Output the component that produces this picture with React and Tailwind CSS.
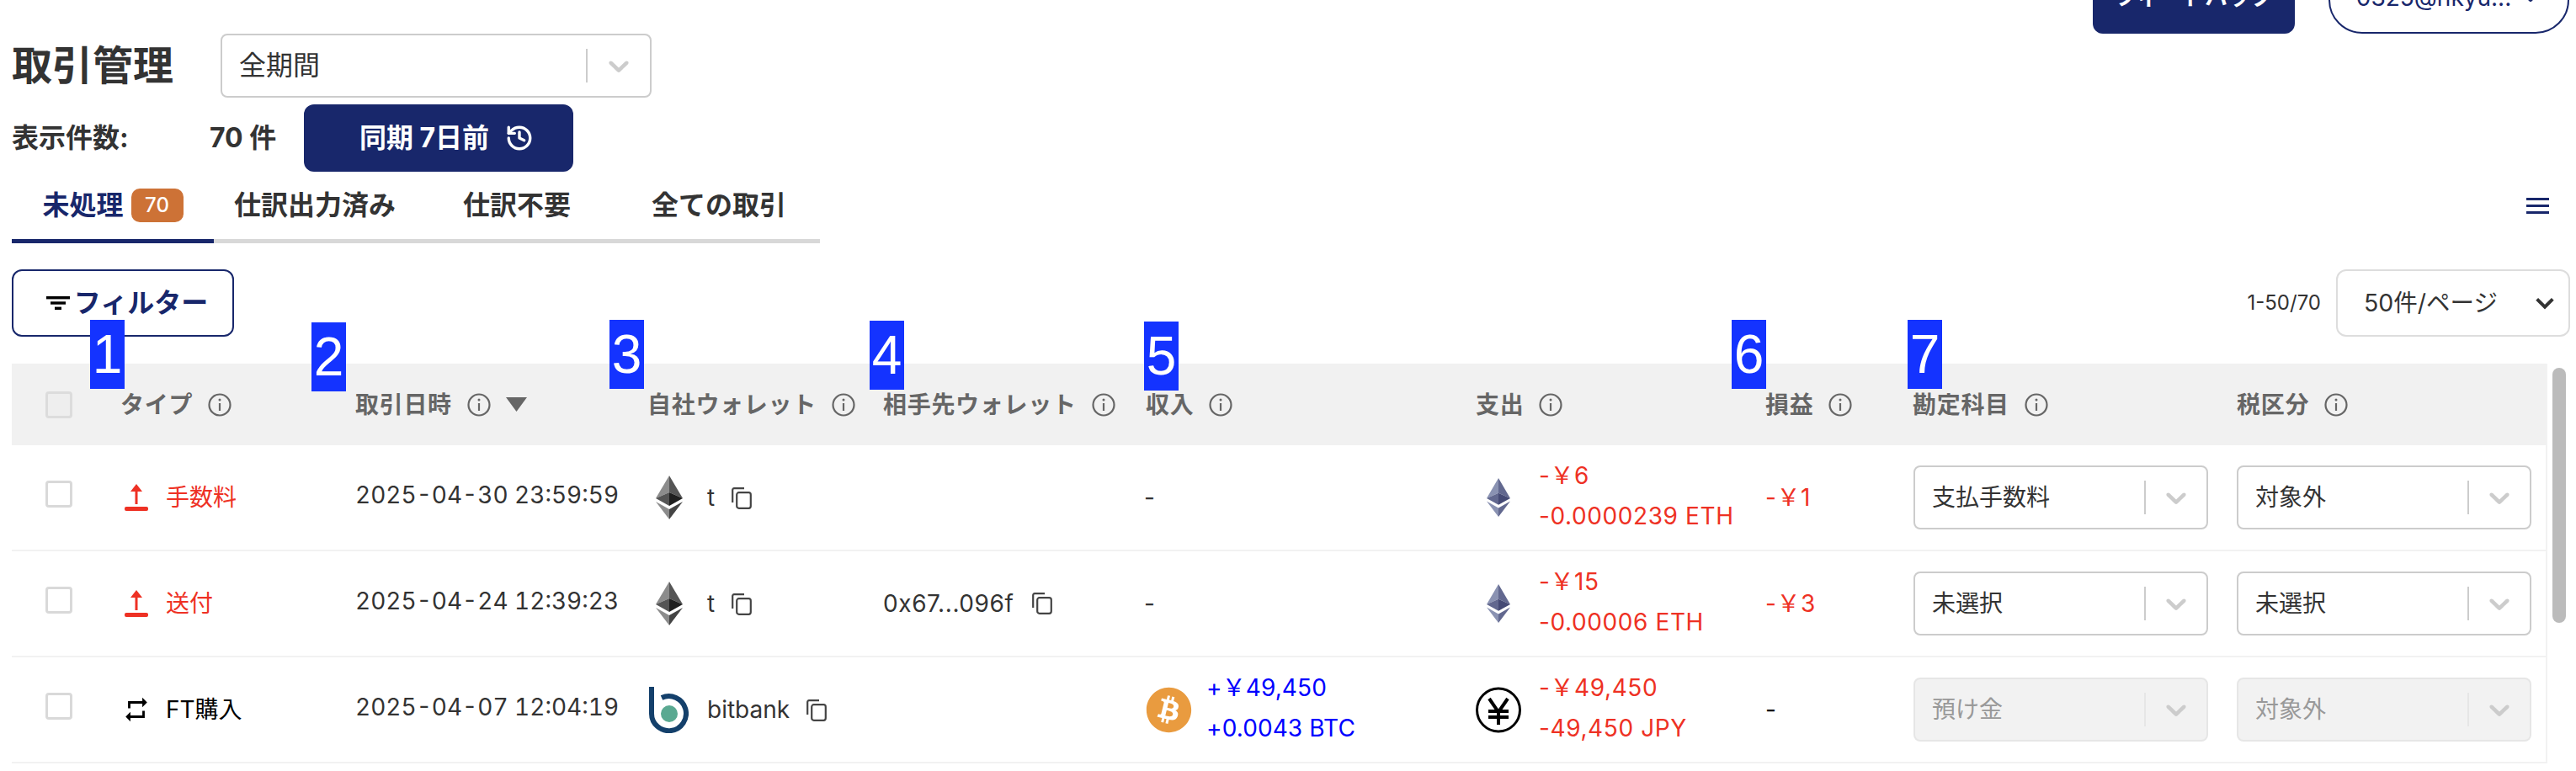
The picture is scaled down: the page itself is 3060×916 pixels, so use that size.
import React from "react";
import { History } from "lucide-react";
import { MdRepeat } from "react-icons/md";
import { FaBitcoin } from "react-icons/fa";

const GRID = "grid grid-cols-[129px_279px_347px_280px_310px_391px_347px_175px_385px_1fr]";

function Chevron({ className }) {
  return (
    <svg viewBox="0 0 20 20" className={className} fill="currentColor">
      <path d="M4.516 7.548c0.436-0.446 1.043-0.481 1.576 0l3.908 3.747 3.908-3.747c0.533-0.481 1.141-0.446 1.574 0 0.436 0.445 0.408 1.197 0 1.615-0.406 0.418-4.695 4.502-4.695 4.502-0.217 0.223-0.502 0.335-0.787 0.335s-0.57-0.112-0.789-0.335c0 0-4.287-4.084-4.695-4.502s-0.436-1.17 0-1.615z" />
    </svg>
  );
}

function Info() {
  return (
    <svg viewBox="0 0 28 28" className="w-[28px] h-[28px] shrink-0" fill="none" stroke="#666666" strokeWidth="2.2">
      <circle cx="14" cy="14" r="12.5" />
      <path d="M14 12v9" strokeWidth="2.2" />
      <circle cx="14" cy="8" r="1.5" fill="#666666" stroke="none" />
    </svg>
  );
}

function Copy() {
  return (
    <svg viewBox="0 0 24 26" className="w-[24px] h-[26px] shrink-0" fill="none" stroke="#444444" strokeWidth="2.2">
      <path d="M1.2 18V3a1.8 1.8 0 0 1 1.8-1.8H15" />
      <rect x="6.2" y="6.2" width="16.6" height="18.6" rx="2.5" />
    </svg>
  );
}

function Upload() {
  return (
    <svg viewBox="0 0 28 32" className="w-[28px] h-[32px] shrink-0" fill="#ee3124">
      <path d="M14 0l7 9h-5.5v15h-3V9H7z" />
      <rect x="0" y="27" width="28" height="5" rx="2" />
    </svg>
  );
}

function Eth({ muted, className }) {
  const c = muted
    ? ["#8a92b2", "#62688f", "#454a75", "#8a92b2", "#62688f"]
    : ["#8c8c8c", "#555555", "#1f1f1f", "#8c8c8c", "#444444"];
  return (
    <svg viewBox="0 0 32 52" preserveAspectRatio="none" className={className}>
      <polygon points="16,0 0,27 16,20" fill={c[0]} />
      <polygon points="16,0 32,27 16,20" fill={c[1]} />
      <polygon points="16,20 0,27 16,36" fill={c[1]} />
      <polygon points="16,20 32,27 16,36" fill={c[2]} />
      <polygon points="0,31 16,52 16,40" fill={c[3]} />
      <polygon points="32,31 16,52 16,40" fill={c[4]} />
    </svg>
  );
}

function Bitbank() {
  return (
    <svg viewBox="0 0 47 55" className="w-[47px] h-[55px] shrink-0 ml-[2px] -mr-[7px]" fill="none">
      <path d="M3 0V31.5A20.5 20.5 0 1 0 15 13" stroke="#14406b" strokeWidth="6" />
      <circle cx="24" cy="32" r="10" fill="#5aa991" />
    </svg>
  );
}

function Yen() {
  return (
    <svg viewBox="0 0 54 55" className="w-[54px] h-[55px] shrink-0" fill="none" stroke="#000000">
      <circle cx="27" cy="27.5" r="25.5" strokeWidth="3" />
      <path d="M16 14l11 16 11-16M27 30v15M15 29h24M15 36h24" strokeWidth="4" />
    </svg>
  );
}

function Sel({ value, disabled }) {
  return (
    <div
      className={`flex items-center w-[350px] h-[76px] rounded-[8px] border-2 ${
        disabled ? "bg-[#f2f2f2] border-[#e6e6e6] text-[#999999]" : "bg-white border-[#cccccc] text-[#333333]"
      }`}
    >
      <span className="flex-1 pl-[20px] text-[28px] leading-[40px]">{value}</span>
      <span className={`w-[2px] h-[40px] ${disabled ? "bg-[#e6e6e6]" : "bg-[#cccccc]"}`} />
      <span className="w-[72px] flex justify-center">
        <Chevron className="w-[40px] h-[40px] text-[#cccccc]" />
      </span>
    </div>
  );
}

function Amount({ icon, lines, color }) {
  return (
    <div className="flex items-center">
      <div className="w-[70px] flex justify-center shrink-0 -ml-[5px]">{icon}</div>
      <div className={`flex flex-col text-[28px] leading-[48px] tracking-[0.6px] ${color} ml-[13px] -mt-[5px]`}>
        {lines.map((l) => (
          <span key={l}>{l}</span>
        ))}
      </div>
    </div>
  );
}

function Row({ typeIcon, type, typeColor, date, wallet, counter, income, expense, pl, plColor, acct, tax, disabled }) {
  return (
    <div className={`${GRID} h-[126px] border-b-2 border-[#f2f2f2] items-center text-[#333333]`}>
      <div className="pl-[40px]">
        <div className="w-[32px] h-[32px] rounded-[4px] border-[3px] border-[#d9d9d9] bg-white -mt-[8px]" />
      </div>
      <div className={`flex items-center gap-[21px] pl-[5px] text-[28px] ${typeColor}`}>
        {typeIcon}
        <span>{type}</span>
      </div>
      <div className="text-[28px] tabular-nums -mt-[6px]">{date}</div>
      <div className="flex items-center">
        {wallet.icon}
        <span className="text-[28px] ml-[29px]">{wallet.name}</span>
        <span className="ml-[20px] mt-[2px]">
          <Copy />
        </span>
      </div>
      <div className="flex items-center text-[28px]">
        {counter && (
          <>
            <span className="tracking-[0.6px]">{counter}</span>
            <span className="ml-[21px]">
              <Copy />
            </span>
          </>
        )}
      </div>
      <div className="text-[28px]">{income}</div>
      <div>{expense}</div>
      <div className={`text-[28px] tracking-[0.6px] ${plColor}`}>{pl}</div>
      <div className="pl-[1px]">
        <Sel value={acct} disabled={disabled} />
      </div>
      <div>
        <Sel value={tax} disabled={disabled} />
      </div>
    </div>
  );
}

function Head({ label, children, pad }) {
  return (
    <div className={`flex items-center gap-[18px] text-[28px] font-bold text-[#666666] ${pad || ""}`}>
      <span className="tracking-[0.7px]">{label}</span>
      <Info />
      {children}
    </div>
  );
}

function Tag({ n, className }) {
  return (
    <div
      className={`absolute w-[41px] h-[82px] bg-[#1433ff] text-white text-[64px] leading-[82px] text-center font-['Liberation_Sans',sans-serif] ${className}`}
    >
      {n}
    </div>
  );
}

export default function App() {
  const ethDark = <Eth className="w-[32px] h-[52px] shrink-0 ml-[10px]" />;
  const ethMuted = <Eth muted className="w-[28px] h-[46px]" />;
  return (
    <div className="relative w-[3060px] h-[916px] overflow-hidden bg-white font-['Inter','Noto_Sans_CJK_JP',sans-serif] text-[#333333]">
      <div className="flex justify-between pl-[14px] pr-[8px]">
        <div className="flex flex-col pt-[40px]">
          <div className="flex items-center h-[76px]">
            <h1 className="text-[48px] font-bold leading-[60px] w-[248px]">取引管理</h1>
            <div className="flex items-center w-[512px] h-[76px] rounded-[8px] border-2 border-[#cccccc]">
              <span className="flex-1 pl-[20px] text-[32px]">全期間</span>
              <span className="w-[2px] h-[40px] bg-[#cccccc]" />
              <span className="w-[74px] flex justify-center">
                <Chevron className="w-[40px] h-[40px] text-[#cccccc]" />
              </span>
            </div>
          </div>
          <div className="flex items-center h-[80px] mt-[8px] font-bold text-[32px]">
            <span className="w-[235px]">表示件数:</span>
            <span className="w-[112px]">70 件</span>
            <button className="flex items-center justify-center gap-[19px] pl-[19px] w-[320px] h-[80px] rounded-[12px] bg-[#18276b] text-white font-bold text-[32px]">
              同期 7日前
              <History className="w-[34px] h-[34px]" strokeWidth={2.4} />
            </button>
          </div>
        </div>
        <div className="flex items-start gap-[40px] -mt-[46px]">
          <button className="flex items-center justify-center w-[240px] h-[86px] rounded-[12px] bg-[#18276b] text-white font-bold text-[27px]">
            フィードバック
          </button>
          <button className="flex items-center justify-center gap-[10px] w-[286px] h-[86px] rounded-[40px] border-2 border-[#18276b] bg-white text-[#18276b] text-[28px]">
            0325@hkyu...
            <Chevron className="w-[26px] h-[26px]" />
          </button>
        </div>
      </div>

      <div className="flex items-center justify-between pl-[14px] pr-[32px]">
        <div className="flex text-[32px] font-bold text-[#333333]">
          <div className="flex items-center justify-center gap-[9px] w-[240px] h-[85px] border-b-[5px] border-[#18276b] text-[#18276b]">
            未処理
            <span className="flex items-center justify-center w-[62px] h-[40px] rounded-[10px] bg-[#cd7236] text-white text-[24px] font-medium">
              70
            </span>
          </div>
          <div className="flex items-center justify-center w-[240px] h-[85px] border-b-[5px] border-[#d8d8d8]">仕訳出力済み</div>
          <div className="flex items-center justify-center w-[240px] h-[85px] border-b-[5px] border-[#d8d8d8]">仕訳不要</div>
          <div className="flex items-center justify-center w-[240px] h-[85px] border-b-[5px] border-[#d8d8d8]">全ての取引</div>
        </div>
        <div className="flex flex-col gap-[5px] w-[27px] -mt-[5px]">
          <span className="h-[3px] bg-[#18276b]" />
          <span className="h-[3px] bg-[#18276b]" />
          <span className="h-[3px] bg-[#18276b]" />
        </div>
      </div>

      <div className="flex items-center justify-between pl-[14px] pr-[7px] mt-[31px]">
        <button className="flex items-center justify-center gap-[5px] pl-[10px] w-[264px] h-[80px] rounded-[12px] border-2 border-[#18276b] text-[#18276b] font-bold text-[32px]">
          <svg viewBox="0 0 28 16" className="w-[28px] h-[16px] shrink-0" fill="#000000">
            <rect x="0" y="0" width="28" height="3.4" />
            <rect x="5" y="6.3" width="18" height="3.4" />
            <rect x="10" y="12.6" width="8" height="3.4" />
          </svg>
          フィルター
        </button>
        <div className="flex items-center">
          <span className="text-[24px] mr-[18px]">1-50/70</span>
          <div className="flex items-center w-[278px] h-[80px] rounded-[12px] border-2 border-[#dddddd] pl-[31px]">
            <span className="text-[28.5px] flex-1">50件/ページ</span>
            <svg viewBox="0 0 24 24" className="w-[28px] h-[28px] mr-[14px]" fill="none" stroke="#333333" strokeWidth="3.4">
              <path d="M4 8l8 8 8-8" />
            </svg>
          </div>
        </div>
      </div>

      <div className="ml-[14px] mt-[32px] w-[3012px] border-r-2 border-[#f2f2f2]">
        <div className={`${GRID} h-[97px] bg-[#f1f1f1] items-center`}>
          <div className="pl-[40px]">
            <div className="w-[32px] h-[32px] rounded-[4px] border-[3px] border-[#dcdcdc] bg-[#eeeeee]" />
          </div>
          <Head label="タイプ" />
          <Head label="取引日時">
            <svg viewBox="0 0 25 17" className="w-[25px] h-[17px]" fill="#666666">
              <path d="M0 0h25L12.5 17z" />
            </svg>
          </Head>
          <Head label="自社ウォレット" />
          <Head label="相手先ウォレット" />
          <Head label="収入" pad="pl-[2px]" />
          <Head label="支出" pad="pl-[3px]" />
          <Head label="損益" />
          <Head label="勘定科目" />
          <Head label="税区分" />
        </div>
        <Row
          typeIcon={<Upload />}
          type="手数料"
          typeColor="text-[#ee3124]"
          date="2025-04-30 23:59:59"
          wallet={{ icon: ethDark, name: "t" }}
          income="-"
          expense={<Amount icon={ethMuted} lines={["-￥6", "-0.0000239 ETH"]} color="text-[#ee3124]" />}
          pl="-￥1"
          plColor="text-[#ee3124]"
          acct="支払手数料"
          tax="対象外"
        />
        <Row
          typeIcon={<Upload />}
          type="送付"
          typeColor="text-[#ee3124]"
          date="2025-04-24 12:39:23"
          wallet={{ icon: ethDark, name: "t" }}
          counter="0x67...096f"
          income="-"
          expense={<Amount icon={ethMuted} lines={["-￥15", "-0.00006 ETH"]} color="text-[#ee3124]" />}
          pl="-￥3"
          plColor="text-[#ee3124]"
          acct="未選択"
          tax="未選択"
        />
        <Row
          typeIcon={<MdRepeat className="w-[34px] h-[34px] -ml-[3px] -mr-[3px] text-black shrink-0" />}
          type="FT購入"
          typeColor="text-black"
          date="2025-04-07 12:04:19"
          wallet={{ icon: <Bitbank />, name: "bitbank" }}
          income={
            <div className="flex items-center">
              <FaBitcoin className="w-[55px] h-[55px] text-[#e99b3f] ml-[2px] shrink-0" />
              <div className="flex flex-col text-[28px] leading-[48px] tracking-[0.1px] text-[#0000ff] ml-[17px] -mt-[5px]">
                <span>+￥49,450</span>
                <span>+0.0043 BTC</span>
              </div>
            </div>
          }
          expense={<Amount icon={<Yen />} lines={["-￥49,450", "-49,450 JPY"]} color="text-[#ee3124]" />}
          pl="-"
          plColor="text-black"
          acct="預け金"
          tax="対象外"
          disabled
        />
      </div>

      <div className="absolute left-[3032px] top-[437px] w-[16px] h-[303px] rounded-full bg-[#bbbbbb]" />

      <Tag n="1" className="left-[107px] top-[380px]" />
      <Tag n="2" className="left-[370px] top-[383px]" />
      <Tag n="3" className="left-[724px] top-[380px]" />
      <Tag n="4" className="left-[1033px] top-[381px]" />
      <Tag n="5" className="left-[1359px] top-[382px]" />
      <Tag n="6" className="left-[2057px] top-[380px]" />
      <Tag n="7" className="left-[2266px] top-[380px]" />
    </div>
  );
}
